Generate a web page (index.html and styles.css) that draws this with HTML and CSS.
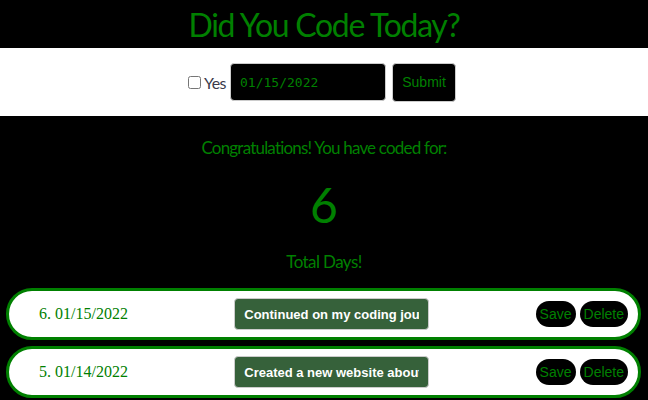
FILE: index.html
```html
<!DOCTYPE html>
<html lang="en">
<head>
<meta charset="utf-8">
<title>Did You Code Today?</title>
<link rel="stylesheet" href="styles.css">
</head>
<body>
<h1 class="title">Did You Code Today?</h1>
<form class="entry-form">
  <label class="yes"><input type="checkbox" class="check">Yes</label>
  <input type="text" class="date-input" value="01/15/2022">
  <button type="button" class="submit">Submit</button>
</form>
<section class="summary">
  <p class="congrats">Congratulations! You have coded for:</p>
  <p class="count">6</p>
  <p class="total">Total Days!</p>
</section>
<ul class="entries">
  <li class="entry">
    <p class="entry-date">6. 01/15/2022</p>
    <input type="text" class="entry-note" value="Continued on my coding journey">
    <div class="actions">
      <button type="button" class="pill">Save</button>
      <button type="button" class="pill">Delete</button>
    </div>
  </li>
  <li class="entry">
    <p class="entry-date">5. 01/14/2022</p>
    <input type="text" class="entry-note" value="Created a new website about coding">
    <div class="actions">
      <button type="button" class="pill">Save</button>
      <button type="button" class="pill">Delete</button>
    </div>
  </li>
</ul>
</body>
</html>
```
FILE: styles.css
```css
html, body {
  margin: 0;
  padding: 0;
  background: #000;
}
body {
  font-family: Lato, "Noto Sans", sans-serif;
  color: #008000;
}
.title {
  margin: 0;
  height: 48px;
  font-size: 32px;
  font-weight: 400;
  letter-spacing: -1.3px;
  line-height: 50px;
  text-align: center;
  color: #008000;
}
.entry-form {
  background: #fff;
  height: 68px;
  display: flex;
  align-items: center;
  justify-content: center;
  gap: 4px;
  padding-right: 4px;
}
.yes {
  display: flex;
  align-items: center;
  font-size: 16px;
  letter-spacing: -0.5px;
  color: #3a3a4a;
}
.check {
  margin: 0 3px 0 0;
  width: 13px;
  height: 13px;
}
.date-input {
  box-sizing: border-box;
  width: 156px;
  height: 38px;
  background: #000;
  color: #008000;
  border: 1px solid #ccc;
  border-radius: 4px;
  padding: 0 9px;
  font-family: "DejaVu Sans Mono", monospace;
  font-size: 13px;
  outline: none;
}
.submit {
  box-sizing: border-box;
  width: 64px;
  height: 39px;
  margin-left: 2px;
  background: #000;
  color: #008000;
  border: 1px solid #ccc;
  border-radius: 4px;
  font-family: "Liberation Sans", Arial, sans-serif;
  font-size: 14px;
  padding: 0;
}
.summary {
  text-align: center;
}
.summary p {
  margin: 0;
}
.congrats {
  padding-top: 20px;
  font-size: 17px;
  letter-spacing: -0.8px;
  line-height: 24px;
}
.count {
  font-size: 48px;
  line-height: 58px;
  padding-top: 16px;
}
.total {
  padding-top: 16px;
  font-size: 17px;
  letter-spacing: -0.6px;
  line-height: 24px;
}
.entries {
  list-style: none;
  margin: 0;
  padding: 14px 7px 0 6px;
  display: flex;
  flex-direction: column;
  gap: 6px;
}
.entry {
  box-sizing: border-box;
  height: 52px;
  background: #fff;
  border: 3px solid #008000;
  border-radius: 26px;
  display: flex;
  align-items: center;
  justify-content: space-between;
  padding: 0 10px 0 30px;
}
.entry-date {
  margin: 0;
  font-family: "Liberation Serif", "Times New Roman", serif;
  font-size: 16px;
  color: #008000;
}
.entry-note {
  box-sizing: border-box;
  width: 195px;
  height: 32px;
  background: #36613a;
  color: #fff;
  border: 1px solid #ccc;
  border-radius: 4px;
  padding: 0 9px;
  font-family: "Liberation Sans", Arial, sans-serif;
  font-size: 13px;
  font-weight: 700;
  outline: none;
}
.actions {
  display: flex;
  gap: 4px;
}
.pill {
  height: 26px;
  background: #000;
  color: #008000;
  border: none;
  border-radius: 13px;
  padding: 0 4px;
  font-family: "Liberation Sans", Arial, sans-serif;
  font-size: 14px;
}
```
